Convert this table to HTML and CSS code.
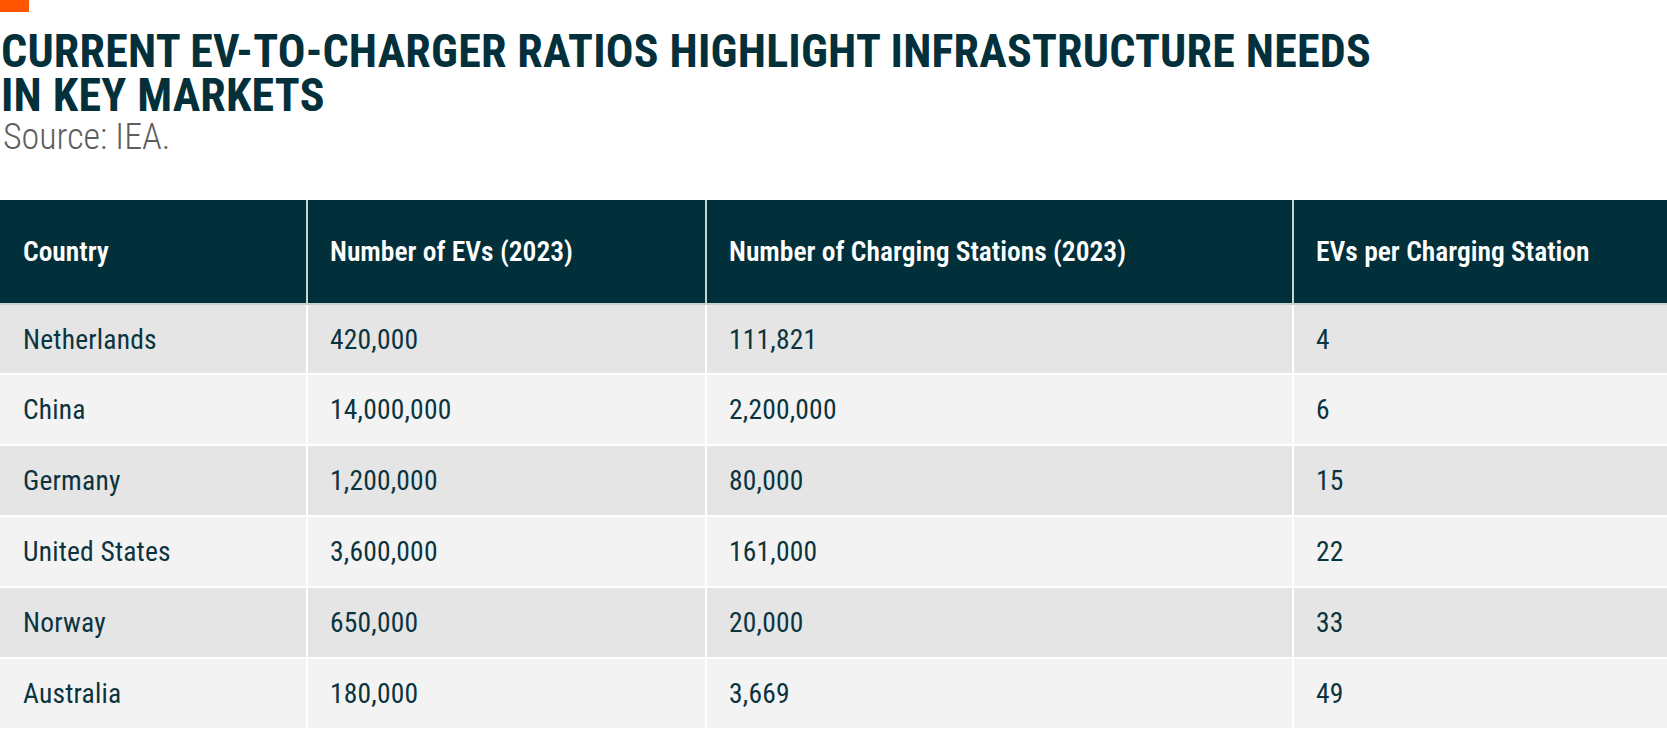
FILE: index.html
```html
<!DOCTYPE html>
<html lang="en">
<head>
<meta charset="utf-8">
<title>EV-to-charger ratios</title>
<link rel="stylesheet" href="styles.css">
</head>
<body>
<div class="accent"></div>
<h1 class="title">CURRENT EV-TO-CHARGER RATIOS HIGHLIGHT INFRASTRUCTURE NEEDS<br>IN KEY MARKETS</h1>
<p class="source">Source: IEA.</p>
<table class="data">
  <colgroup>
    <col class="c1"><col class="c2"><col class="c3"><col class="c4">
  </colgroup>
  <thead>
    <tr>
      <th>Country</th>
      <th>Number of EVs (2023)</th>
      <th>Number of Charging Stations (2023)</th>
      <th>EVs per Charging Station</th>
    </tr>
  </thead>
  <tbody>
    <tr class="odd"><td>Netherlands</td><td>420,000</td><td>111,821</td><td>4</td></tr>
    <tr class="even"><td>China</td><td>14,000,000</td><td>2,200,000</td><td>6</td></tr>
    <tr class="odd"><td>Germany</td><td>1,200,000</td><td>80,000</td><td>15</td></tr>
    <tr class="even"><td>United States</td><td>3,600,000</td><td>161,000</td><td>22</td></tr>
    <tr class="odd"><td>Norway</td><td>650,000</td><td>20,000</td><td>33</td></tr>
    <tr class="even"><td>Australia</td><td>180,000</td><td>3,669</td><td>49</td></tr>
  </tbody>
</table>
</body>
</html>
```

FILE: styles.css
```css
html, body {
  margin: 0;
  padding: 0;
  background: #ffffff;
}
body {
  font-family: "Roboto Condensed", "DejaVu Sans Condensed", sans-serif;
  color: #03303a;
  overflow: hidden;
}
.accent {
  width: 29px;
  height: 12px;
  background: #ff5400;
}
.title {
  margin: 17px 0 0 0;
  font-size: 46px;
  line-height: 44px;
  font-weight: 700;
  letter-spacing: 0.2px;
  color: #03303a;
  padding-left: 1px;
}
.source {
  margin: 0;
  font-size: 36px;
  line-height: 40px;
  font-weight: 300;
  color: #5e5e5e;
  padding-left: 3px;
}
.data {
  margin-top: 43px;
  width: 1667px;
  border-collapse: separate;
  border-spacing: 0;
  table-layout: fixed;
}
.c1 { width: 308px; }
.c2 { width: 399px; }
.c3 { width: 587px; }
.c4 { width: 373px; }
.data th {
  background: #02303a;
  color: #ffffff;
  font-size: 27.5px;
  font-weight: 600;
  text-align: left;
  height: 105px;
  padding: 0 0 0 22px;
  box-sizing: border-box;
  border-right: 2px solid #c9d2d3;
  border-bottom: 2px solid #c9d2d3;
  vertical-align: middle;
}
.data th:first-child,
.data td:first-child {
  padding-left: 23px;
}
.data th:last-child,
.data td:last-child {
  border-right: 0;
}
.data td {
  font-size: 27.5px;
  font-weight: 400;
  letter-spacing: 0.2px;
  color: #0b3440;
  height: 71px;
  box-sizing: border-box;
  padding: 0 0 0 22px;
  border-right: 2px solid #ffffff;
  border-bottom: 2px solid #ffffff;
  vertical-align: middle;
}
.data tbody tr:first-child td {
  height: 70px;
}
.odd td { background: #e5e5e5; }
.even td { background: #f3f3f3; }
```
